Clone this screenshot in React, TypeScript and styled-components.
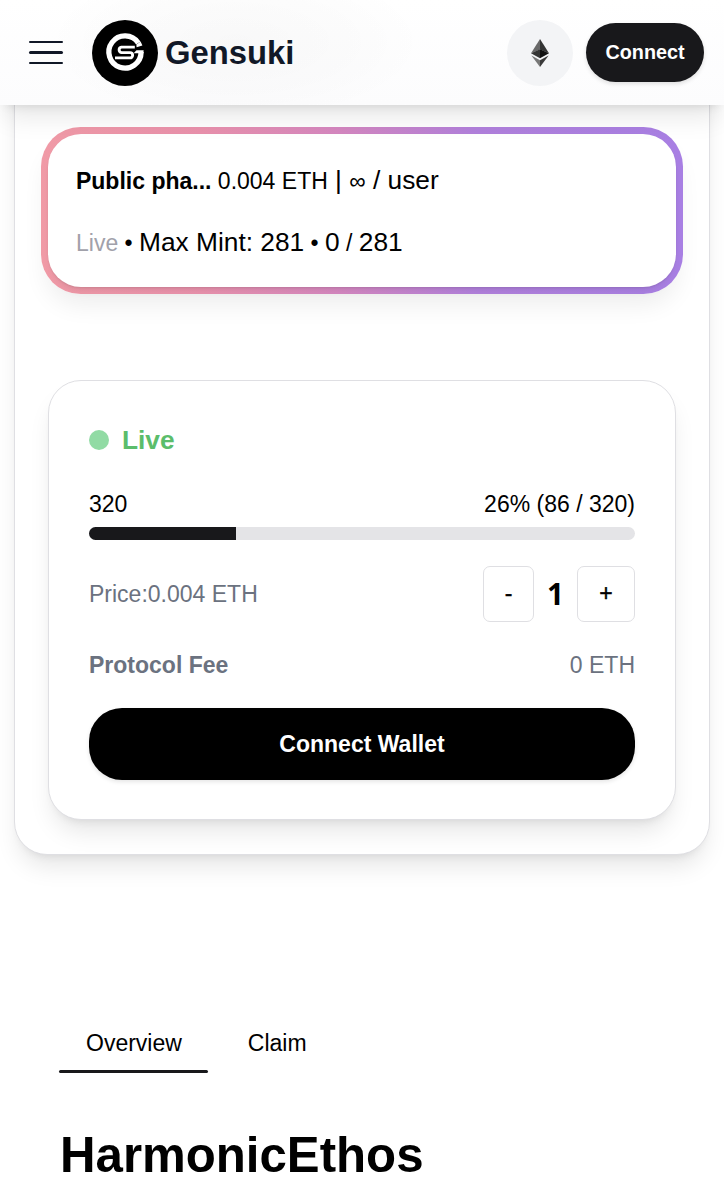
import React from "react";
import styled, { createGlobalStyle } from "styled-components";

const GlobalStyle = createGlobalStyle`
  *, *::before, *::after { box-sizing: border-box; }
  html, body { margin: 0; padding: 0; background: #fff; }
  body { font-family: "Liberation Sans", Arial, sans-serif; font-size: 23px; color: #000; }
  button { font: inherit; cursor: pointer; }
`;

const Page = styled.div`
  height: 1200px;
  overflow: hidden;
  background: #fff;
`;

const Header = styled.header`
  position: relative;
  z-index: 10;
  display: flex;
  align-items: center;
  height: 105px;
  padding: 0 20px 0 29px;
  background:
    radial-gradient(ellipse 190px 80px at 235px 42px, rgba(0, 0, 0, 0.022), rgba(0, 0, 0, 0.011) 60%, transparent),
    linear-gradient(#fff, #fcfcfd);
  box-shadow: 0 16px 25px -5px rgba(0, 0, 0, 0.1), 0 6px 10px -6px rgba(0, 0, 0, 0.12);
`;

const MenuButton = styled.button`
  display: flex;
  flex-direction: column;
  justify-content: space-between;
  width: 34px;
  height: 24px;
  padding: 0;
  border: 0;
  background: none;
`;

const MenuLine = styled.span`
  height: 2.4px;
  border-radius: 2px;
  background: #111827;
`;

const Brand = styled.div`
  display: flex;
  align-items: center;
  gap: 7px;
  margin-left: 29px;
`;

const BrandName = styled.span`
  color: #111827;
  font-size: 32.8px;
  font-weight: 700;
  line-height: 46px;
`;

const Actions = styled.div`
  display: flex;
  align-items: center;
  gap: 13px;
  margin-left: auto;
`;

const NetworkButton = styled.button`
  display: flex;
  align-items: center;
  justify-content: center;
  width: 66px;
  height: 66px;
  padding: 0;
  border: 0;
  border-radius: 50%;
  background: #f3f4f6;
`;

const ConnectButton = styled.button`
  width: 118px;
  height: 59px;
  padding: 0;
  border: 0;
  border-radius: 30px;
  background: #18181b;
  color: #fff;
  font-size: 19.8px;
  font-weight: 700;
  box-shadow: 0 2px 4px rgba(0, 0, 0, 0.12);
`;

const raised = `
  border: 1px solid #dfdfe3;
  border-radius: 33px;
  background: #fff;
  box-shadow: 0 16px 25px -5px rgba(0, 0, 0, 0.1), 0 6px 10px -6px rgba(0, 0, 0, 0.1);
`;

const MintPanel = styled.main`
  ${raised}
  height: 800px;
  margin: -50px 14px 0;
  padding: 71px 26px 0;
`;

const PhaseFrame = styled.section`
  height: 167px;
  padding: 6.6px;
  border-radius: 39.5px;
  background: linear-gradient(90deg, #f09aa6 0%, #e991ac 25%, #d587bf 46%, #b180dc 68%, #a87fe3 100%);
  box-shadow: 0 16px 25px -5px rgba(0, 0, 0, 0.07);
`;

const PhaseCard = styled.div`
  height: 153.8px;
  padding: 27px 28.4px;
  border-radius: 33px;
  background: #fff;
  box-shadow: 0 1px 2px rgba(0, 0, 0, 0.08), 0 7px 10px -5px rgba(0, 0, 0, 0.1);
`;

const PhaseLine = styled.p`
  height: 39.5px;
  margin: 0 0 22.5px;
  line-height: 39.5px;
  white-space: pre;
`;

const Large = styled.span`
  font-size: 26.3px;
`;

const Faded = styled.span`
  color: #a1a1aa;
`;

const MintCard = styled.section`
  ${raised}
  height: 440px;
  margin: 86px 7px 0;
  padding: 39px 40px;
`;

const Status = styled.div`
  display: flex;
  align-items: center;
  gap: 13px;
  height: 40px;
  color: #5bbd6b;
  font-size: 26.3px;
  font-weight: 700;
`;

const StatusDot = styled.span`
  width: 20px;
  height: 20px;
  border-radius: 50%;
  background: #91dba4;
`;

const Row = styled.div<{ $muted?: boolean; $height: number; $top: number }>`
  display: flex;
  align-items: center;
  justify-content: space-between;
  height: ${(p) => p.$height}px;
  margin-top: ${(p) => p.$top}px;
  color: ${(p) => (p.$muted ? "#6b7280" : "#000")};
`;

const Track = styled.div`
  height: 13px;
  margin-top: 6px;
  overflow: hidden;
  border-radius: 7px;
  background: #e4e4e7;
`;

const Fill = styled.div`
  height: 100%;
  background: #18181b;
`;

const Stepper = styled.div`
  display: flex;
  align-items: center;
  color: #000;
`;

const StepButton = styled.button<{ $width: number }>`
  width: ${(p) => p.$width}px;
  height: 56px;
  padding: 0 0 2px;
  border: 1px solid #dfdfe3;
  border-radius: 7px;
  background: #fff;
  color: #000;
  -webkit-text-stroke: 0.4px #000;
`;

const Quantity = styled.span`
  width: 43px;
  font-family: "Open Sans", sans-serif;
  font-size: 29.6px;
  font-weight: 700;
  line-height: 40px;
  padding-bottom: 1px;
  text-align: center;
`;

const WalletButton = styled.button`
  display: block;
  width: 100%;
  height: 72px;
  margin-top: 26px;
  padding: 0;
  border: 0;
  border-radius: 33px;
  background: #000;
  color: #fff;
  font-weight: 700;
  box-shadow: 0 2px 4px rgba(0, 0, 0, 0.1);
`;

const Tabs = styled.nav`
  display: flex;
  gap: 13px;
  margin: 161px 0 0 59px;
`;

const Tab = styled.button<{ $active?: boolean }>`
  height: 57px;
  padding: 0 26px 2px 27px;
  border: 0;
  background: none;
  color: #000;
  line-height: 55px;
  position: relative;

  &::after {
    content: "";
    display: ${(p) => (p.$active ? "block" : "none")};
    position: absolute;
    left: 0;
    right: 0;
    bottom: 0;
    height: 3.3px;
    border-radius: 2px;
    background: #18181b;
  }
`;

const Title = styled.h1`
  margin: 52px 0 0 60px;
  font-size: 49.2px;
  font-weight: 700;
  line-height: 60px;
`;

const BrandMark = () => (
  <svg width="66" height="66" viewBox="0 0 66 66" fill="none" aria-hidden="true">
    <circle cx="33" cy="33" r="33" fill="#000" />
    <path d="M46.3 22.9 A16.1 16.1 0 1 0 49.1 32" stroke="#fff" strokeWidth="5.3" />
    <path d="M44.4 24.4 L48.6 21.6 L50.4 25.4 L44.6 27.2 Z" fill="#fff" />
    <path d="M51.6 30.3 H44.5 L41.6 33.2 H51.4 Z" fill="#fff" />
    <path
      d="M42.8 27.1 H29.4 A2.8 2.8 0 0 0 29.4 32.6 H38 A2.6 2.6 0 0 1 38 37.9 H23"
      stroke="#fff"
      strokeWidth="2.9"
    />
  </svg>
);

const EthMark = () => (
  <svg width="18" height="28" viewBox="0 0 18 28" aria-hidden="true">
    <path d="M9 0 L0 14.2 L9 10.4 Z" fill="#686868" />
    <path d="M9 0 L18 14.2 L9 10.4 Z" fill="#343434" />
    <path d="M0 14.2 L9 10.2 V19.3 Z" fill="#353535" />
    <path d="M18 14.2 L9 10.2 V19.3 Z" fill="#111" />
    <path d="M0.4 16.4 L9 21.3 V28 Z" fill="#777" />
    <path d="M17.6 16.4 L9 21.3 V28 Z" fill="#3a3a3a" />
  </svg>
);

const minted = 86;
const supply = 320;

export default function App() {
  return (
    <>
      <GlobalStyle />
      <Page>
        <Header>
          <MenuButton aria-label="Menu">
            <MenuLine />
            <MenuLine />
            <MenuLine />
          </MenuButton>
          <Brand>
            <BrandMark />
            <BrandName>Gensuki</BrandName>
          </Brand>
          <Actions>
            <NetworkButton aria-label="Ethereum">
              <EthMark />
            </NetworkButton>
            <ConnectButton>Connect</ConnectButton>
          </Actions>
        </Header>
        <MintPanel>
          <PhaseFrame>
            <PhaseCard>
              <PhaseLine>
                <b>Public pha...</b> 0.004 ETH<Large> | </Large>∞<Large> / user</Large>
              </PhaseLine>
              <PhaseLine>
                <Faded>Live</Faded> • <Large>Max Mint: 281</Large> • <Large>0</Large> / <Large>281</Large>
              </PhaseLine>
            </PhaseCard>
          </PhaseFrame>
          <MintCard>
            <Status>
              <StatusDot />
              Live
            </Status>
            <Row $height={34} $top={27}>
              <span>{supply}</span>
              <span>26% ({minted} / {supply})</span>
            </Row>
            <Track>
              <Fill style={{ width: `${(minted / supply) * 100}%` }} />
            </Track>
            <Row $muted $height={56} $top={26}>
              <span>Price:0.004 ETH</span>
              <Stepper>
                <StepButton $width={51}>-</StepButton>
                <Quantity>1</Quantity>
                <StepButton $width={58}>+</StepButton>
              </Stepper>
            </Row>
            <Row $muted $height={34} $top={26}>
              <b>Protocol Fee</b>
              <span>0 ETH</span>
            </Row>
            <WalletButton>Connect Wallet</WalletButton>
          </MintCard>
        </MintPanel>
        <Tabs>
          <Tab $active>Overview</Tab>
          <Tab>Claim</Tab>
        </Tabs>
        <Title>HarmonicEthos</Title>
      </Page>
    </>
  );
}
